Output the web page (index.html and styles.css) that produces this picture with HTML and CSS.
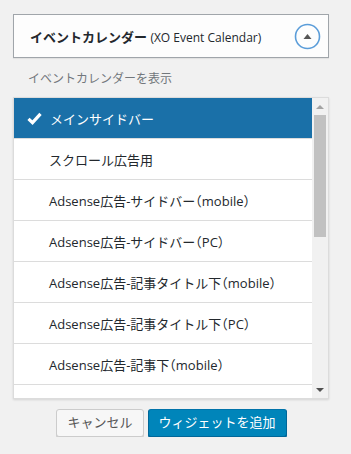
FILE: index.html
```html
<!DOCTYPE html>
<html lang="ja">
<head>
  <meta charset="UTF-8">
  <meta name="viewport" content="width=device-width, initial-scale=1.0">
  <title>イベントカレンダー</title>
  <link rel="stylesheet" href="styles.css">
</head>
<body>
  <div class="widget">
    <div class="widget-top">
      <h3 class="widget-title">イベントカレンダー <span class="in-title">(XO Event Calendar)</span></h3>
      <button class="widget-toggle" aria-label="閉じる">
        <svg width="27" height="27" viewBox="0 0 27 27">
          <circle cx="13.5" cy="13.5" r="12" fill="none" stroke="#5b9dd9" stroke-width="1.6"/>
          <polygon points="9.5,16 17.5,16 13.5,11" fill="#555"/>
        </svg>
      </button>
    </div>
    <p class="widget-desc">イベントカレンダーを表示</p>
    <div class="chooser">
      <ul class="chooser-list">
        <li class="selected">
          <svg class="check" width="15" height="13" viewBox="0 0 15 13">
            <path d="M1.5 6.8 L5.5 10.6 L13.5 1.8" fill="none" stroke="#fff" stroke-width="3.2" stroke-linejoin="miter"/>
          </svg>
          メインサイドバー
        </li>
        <li>スクロール広告用</li>
        <li>Adsense広告-サイドバー（mobile）</li>
        <li>Adsense広告-サイドバー（PC）</li>
        <li>Adsense広告-記事タイトル下（mobile）</li>
        <li>Adsense広告-記事タイトル下（PC）</li>
        <li>Adsense広告-記事下（mobile）</li>
      </ul>
      <div class="scrollbar">
        <span class="arrow up"></span>
        <div class="track"><div class="thumb"></div></div>
        <span class="arrow down"></span>
      </div>
    </div>
    <div class="actions">
      <button class="button">キャンセル</button>
      <button class="button primary">ウィジェットを追加</button>
    </div>
  </div>
</body>
</html>
```

FILE: styles.css
```css
* {
  margin: 0;
  padding: 0;
  box-sizing: border-box;
}
body {
  background: #f1f1f1;
  font-family: 'Open Sans', 'Noto Sans CJK JP', sans-serif;
  font-size: 13px;
  color: #23282d;
  padding: 14px 22px 0 13px;
}
.widget {
  width: 316px;
}
.widget-top {
  height: 44px;
  background: #fdfdfd;
  border: 1px solid #a0a5aa;
  box-shadow: 0 1px 1px rgba(0, 0, 0, 0.06);
  display: flex;
  align-items: center;
  justify-content: space-between;
  padding: 0 7px 0 16px;
}
.widget-title {
  font-size: 13px;
  font-weight: 700;
  color: #23282d;
  white-space: nowrap;
}
.in-title {
  font-size: 12px;
  font-weight: 400;
}
.widget-toggle {
  border: none;
  background: none;
  display: flex;
}
.widget-desc {
  font-size: 12px;
  color: #72777c;
  line-height: 18px;
  margin: 12px 0 9px 15px;
}
.chooser {
  height: 302px;
  background: #fff;
  border: 1px solid #dcdcdc;
  box-shadow: 0 1px 2px rgba(0, 0, 0, 0.12);
  display: flex;
}
.chooser-list {
  list-style: none;
  flex: 1;
  overflow: hidden;
}
.chooser-list li {
  height: 41px;
  border-bottom: 1px solid #dcdcdc;
  display: flex;
  align-items: center;
  padding-left: 35px;
  white-space: nowrap;
  color: #23282d;
  font-feature-settings: "halt";
}
.chooser-list li.selected {
  background: #1a70a8;
  color: #fff;
  padding-left: 13px;
}
.check {
  margin-right: 8px;
}
.scrollbar {
  width: 16px;
  background: #f1f1f1;
  display: flex;
  flex-direction: column;
  align-items: center;
}
.track {
  flex: 1;
  width: 100%;
  padding: 0 2px;
}
.thumb {
  height: 122px;
  background: #c1c1c1;
}
.arrow {
  height: 17px;
  display: flex;
  align-items: center;
}
.arrow::before {
  content: "";
  border-left: 4px solid transparent;
  border-right: 4px solid transparent;
}
.arrow.up::before {
  border-bottom: 4px solid #a3a3a3;
}
.arrow.down::before {
  border-top: 4px solid #505050;
}
.actions {
  display: flex;
  justify-content: center;
  gap: 4px;
  margin-top: 10px;
  padding-left: 1px;
}
.button {
  height: 28px;
  display: inline-flex;
  align-items: center;
  line-height: 1.4;
  padding: 0 10px 1px;
  font-family: 'Open Sans', 'Noto Sans CJK JP', sans-serif;
  font-size: 13px;
  color: #555;
  background: #f7f7f7;
  border: 1px solid #ccc;
  border-radius: 3px;
  box-shadow: 0 1px 0 #ccc;
  white-space: nowrap;
}
.button.primary {
  background: #0085ba;
  border-color: #0073aa #006799 #006799;
  box-shadow: 0 1px 0 #006799;
  color: #fff;
}
```
